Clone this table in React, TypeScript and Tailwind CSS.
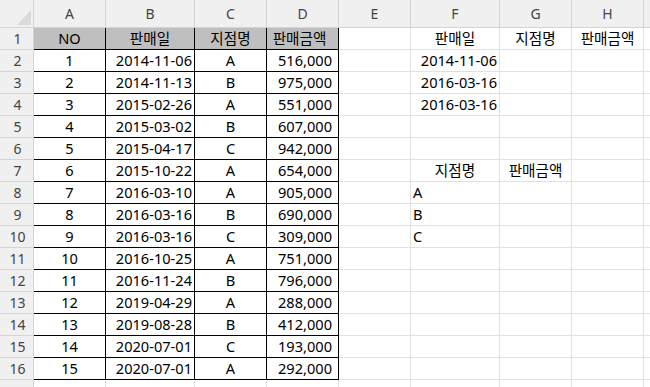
import React from 'react';

type Align = 'left' | 'center' | 'right';

interface CellData {
  text?: string;
  align?: Align;
}

const COLS = ['A', 'B', 'C', 'D', 'E', 'F', 'G', 'H', 'I'];

const sales: [string, string, string, string][] = [
  ['1', '2014-11-06', 'A', '516,000'],
  ['2', '2014-11-13', 'B', '975,000'],
  ['3', '2015-02-26', 'A', '551,000'],
  ['4', '2015-03-02', 'B', '607,000'],
  ['5', '2015-04-17', 'C', '942,000'],
  ['6', '2015-10-22', 'A', '654,000'],
  ['7', '2016-03-10', 'A', '905,000'],
  ['8', '2016-03-16', 'B', '690,000'],
  ['9', '2016-03-16', 'C', '309,000'],
  ['10', '2016-10-25', 'A', '751,000'],
  ['11', '2016-11-24', 'B', '796,000'],
  ['12', '2019-04-29', 'A', '288,000'],
  ['13', '2019-08-28', 'B', '412,000'],
  ['14', '2020-07-01', 'C', '193,000'],
  ['15', '2020-07-01', 'A', '292,000'],
];

// criteria area on the right side of the sheet
const extra: Record<string, CellData> = {
  'F1': { text: '판매일', align: 'center' },
  'G1': { text: '지점명', align: 'center' },
  'H1': { text: '판매금액', align: 'center' },
  'F2': { text: '2014-11-06', align: 'right' },
  'F3': { text: '2016-03-16', align: 'right' },
  'F4': { text: '2016-03-16', align: 'right' },
  'F7': { text: '지점명', align: 'center' },
  'G7': { text: '판매금액', align: 'center' },
  'F8': { text: 'A', align: 'left' },
  'F9': { text: 'B', align: 'left' },
  'F10': { text: 'C', align: 'left' },
};

function getCell(row: number, col: number): CellData {
  if (col < 4 && row >= 1 && row <= 16) {
    if (row === 1) return { text: ['NO', '판매일', '지점명', '판매금액'][col], align: 'center' };
    const r = sales[row - 2];
    return { text: r[col], align: col === 1 || col === 3 ? 'right' : 'center' };
  }
  return extra[`${COLS[col]}${row}`] ?? {};
}

function Cell({ row, col }: { row: number; col: number }) {
  const { text, align } = getCell(row, col);
  const inTable = col < 4 && row >= 1 && row <= 16;
  const header = inTable && row === 1;
  const alignCls =
    align === 'right' ? 'justify-end' : align === 'left' ? 'justify-start' : 'justify-center';
  const padCls = col === 3 ? 'pr-[6px]' : align === 'right' ? 'pr-[2px]' : align === 'left' ? 'pl-[2px]' : '';

  return (
    <div
      className={`flex items-center overflow-hidden whitespace-nowrap border-r border-b text-[14.6px] text-black ${alignCls} ${padCls} ${
        inTable ? 'border-black' : 'border-[#e1e1e1]'
      } ${header ? 'bg-[#bfbfbf]' : 'bg-white'}`}
    >
      {text}
    </div>
  );
}

export default function App() {
  const rows = Array.from({ length: 17 }, (_, i) => i + 1);

  return (
    <div
      className="h-[387px] w-[650px] overflow-hidden bg-white"
      style={{ fontFamily: '"Noto Sans", "Noto Sans CJK KR", sans-serif' }}
    >
      <div className="grid w-max grid-cols-[34px_72px_89px_72px_72px_72px_89px_72px_72px_72px] grid-rows-[28px_repeat(17,22px)]">
        {/* corner */}
        <div className="relative border-r border-b border-[#d4d4d4] bg-[#f0f0f0]">
          <svg className="absolute left-[17px] top-[10px]" width="14" height="15" viewBox="0 0 14 15">
            <polygon points="14,0 14,15 0,15" fill="#dadada" />
          </svg>
        </div>
        {COLS.map((c) => (
          <div
            key={c}
            className="flex items-center justify-center border-r border-b border-[#d4d4d4] bg-[#f0f0f0] text-[14px] text-[#444444]"
          >
            {c === 'I' ? '' : c}
          </div>
        ))}

        {rows.map((r) => (
          <React.Fragment key={r}>
            <div className="flex items-center justify-center border-r border-b border-[#d4d4d4] bg-[#f0f0f0] pl-[2px] text-[14px] text-[#444444]">
              {r < 17 ? r : ''}
            </div>
            {COLS.map((_, ci) => (
              <Cell key={ci} row={r} col={ci} />
            ))}
          </React.Fragment>
        ))}
      </div>
    </div>
  );
}
